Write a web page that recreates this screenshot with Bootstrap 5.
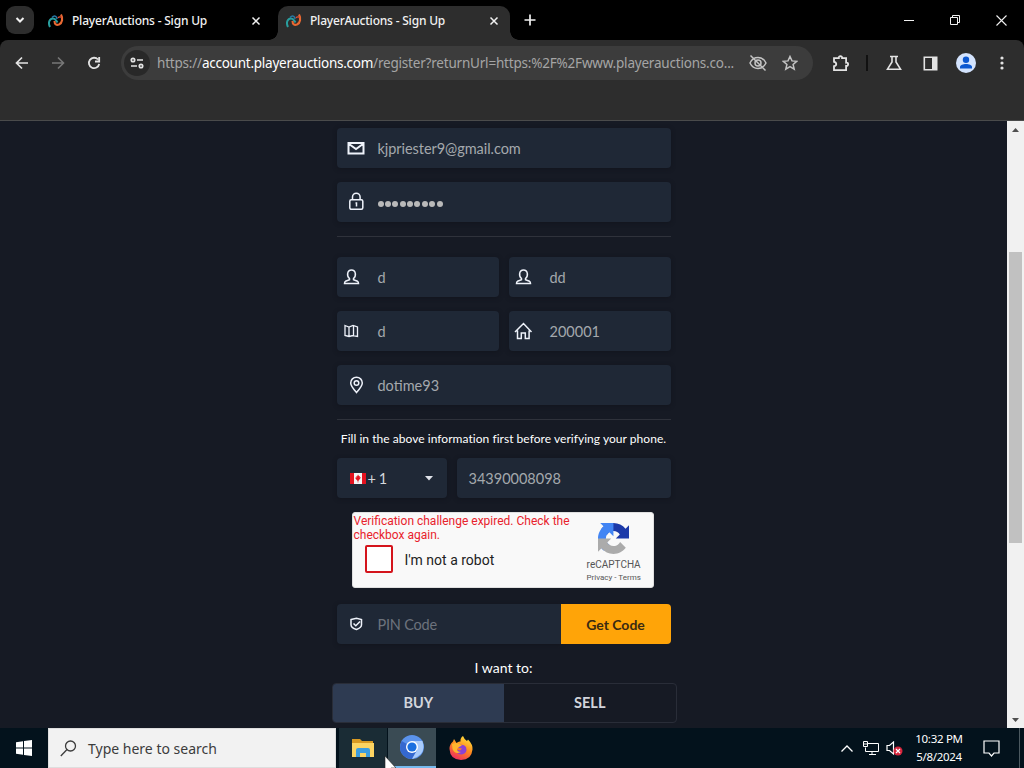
<!DOCTYPE html>
<html lang="en">

<head>
    <meta charset="UTF-8" />
    <meta name="viewport" content="width=device-width, initial-scale=1" />
    <title>PlayerAuctions - Sign Up</title>
    <link href="https://cdn.jsdelivr.net/npm/bootstrap@5.3.3/dist/css/bootstrap.min.css" rel="stylesheet">
    <style>
        body { width: 1024px; height: 768px; overflow: hidden; background: #161a24; font-family: "Noto Sans", sans-serif; }
        svg { display: block; flex: none; }
        .ln { fill: none; stroke: currentColor; }

        /* browser window */
        .tabstrip { height: 40px; background: #000; color: #f1f1f1; }
        .tab-search { width: 28px; height: 28px; margin: 6px 0 0 6px; border-radius: 9px; background: #2d2d2d; }
        .tab-item { height: 34px; margin-top: 6px; padding-bottom: 5px; font: 500 12px "Noto Sans", sans-serif; }
        .tab-first { width: 232px; margin-left: 6px; padding-left: 8px; }
        .tab-active { width: 232px; margin-left: 6px; padding-left: 8px; background: #2d2d2d; border-radius: 10px 10px 0 0; position: relative; }
        .tab-active::before, .tab-active::after { content: ""; position: absolute; bottom: 0; width: 9px; height: 9px; }
        .tab-active::before { left: -9px; background: radial-gradient(circle at 0 0, #000 8.5px, #2d2d2d 9px); }
        .tab-active::after { right: -9px; background: radial-gradient(circle at 100% 0, #000 8.5px, #2d2d2d 9px); }
        .tab-title { width: 179px; margin-left: 8px; white-space: nowrap; letter-spacing: -.2px; }
        .win-btn { width: 46px; height: 40px; }
        .toolbar-wrap { height: 81px; background: #000; }
        .toolbar { height: 81px; background: #2d2d2d; border-bottom: 1px solid #4a4b4b; border-radius: 8px 8px 0 0; }
        .toolbar-row { height: 46px; padding-left: 4px; color: #e3e3e3; }
        .tool-btn { width: 36px; height: 36px; flex: none; }
        .omnibox { width: 692px; height: 34px; margin-left: 9px; border-radius: 17px; background: #3c3c3c; flex: none; }
        .site-chip { width: 26px; height: 26px; margin-left: 3px; border-radius: 50%; background: #282828; flex: none; }
        .url-text { width: 598px; flex: none; padding-left: 7px; font-size: 13.5px; color: #a5a5a5; white-space: nowrap; letter-spacing: -.2px; }
        .url-text b { font-weight: 400; color: #fff; letter-spacing: -.25px; }

        /* sign-up form */
        .page-view { height: 607px; background: #161a24; color: #fff; font-family: Lato, sans-serif; overflow: hidden; }
        .page-main { width: 1007px; }
        .signup { width: 334px; margin: 7px auto 0; }
        .field { height: 40px; background: #1f2836; border-radius: 4px; color: #a4a8ad; font-size: 14.5px; box-shadow: 0 1px 4px #12151d; white-space: nowrap; }
        .field span { padding-top: 1px; }
        .field-icon { width: 20px; height: 20px; margin: 0 12px 0 9px; color: #eef2fa; }
        .field-sm .field-icon { margin: 0 17px 0 4px; }
        .rule { height: 1px; background: #2f323b; }
        .hint { height: 18px; font-size: 12px; line-height: 18px; letter-spacing: .04px; white-space: nowrap; }
        .dot { width: 6px; height: 6px; margin: 2px 1.4px 0 0; border-radius: 50%; background: #b9b9b9; }
        .captcha { width: 302px; height: 76px; margin: 14px auto 0 15px; background: #f9f9f9; border: 1px solid #e0e0e0; border-radius: 3px; color: #222; font-family: Roboto, sans-serif; }
        .captcha-error { color: #e8222c; font-size: 12px; line-height: 14px; padding: 1px 0 0 1px; white-space: nowrap; }
        .captcha-box { width: 28px; height: 28px; margin: 3px 12px 0 12px; border: 2px solid #d4141c; border-radius: 2px; background: #fff; }
        .captcha-brand { width: 78px; color: #555; font-size: 10px; line-height: 12px; padding-top: 10px; }
        .pin { width: 224px; border-radius: 4px 0 0 4px; color: #6d737d; }
        .get-code { width: 110px; height: 40px; padding: 0; border: 0; border-radius: 0 4px 4px 0; background: #ffa408; color: #3a2a12; font-size: 14px; font-weight: 700; }
        .get-code:hover { background: #ffa408; }
        .buy-sell { width: 345px; height: 40px; margin-left: -5px; border: 1px solid #292d38; border-radius: 4px; color: #d2d5dc; font-size: 14.5px; font-weight: 700; overflow: hidden; }
        .buy-on { background: #2e3b52; }

        .scroll { width: 17px; background: #f1f1f1; }
        .scroll-end { height: 17px; }
        .scroll-thumb { width: 13px; height: 291px; margin: 114px auto 0; background: #c1c1c1; }

        /* taskbar */
        .taskbar { height: 40px; background: #03121c; color: #fff; }
        .task-search { width: 288px; background: #f2f2f2; border: 1px solid #dedede; color: #3c3c3c; font-size: 14px; padding-left: 11px; }
        .task-app { width: 48px; height: 40px; }
        .tray-clock { width: 62px; font-size: 11.5px; line-height: 18px; letter-spacing: -.3px; white-space: nowrap; }
        .pointer { position: absolute; left: 384px; top: 755px; }
    </style>
</head>

<body>
    <svg width="0" height="0" class="position-absolute">
        <symbol id="logo" viewBox="0 0 16 16">
            <path d="M2 14C-.5 9 2 5.500 5 5.500c2.500 0 3 2 4.500 4" fill="none" stroke="#299f9f" stroke-width="2" />
            <path d="M4 4.500C7 1.500 9 4 9 6" fill="none" stroke="#287aa8" stroke-width="1.500" />
            <path d="M6.500 8c0 3.500 2 4.500 4.500 3.500C14.500 10 15 5 13 1.500" fill="none" stroke="#e96932" stroke-width="2.100" />
            <path d="M10 5c1-1.500 2-1.500 4-.5" fill="none" stroke="#e14d34" stroke-width="1.300" />
        </symbol>
        <symbol id="close" viewBox="0 0 10 10">
            <path d="M1.500 1.500l7 7M8.500 1.500l-7 7" fill="none" stroke="currentColor" stroke-width="1.500" />
        </symbol>
        <symbol id="person" viewBox="0 0 20 20">
            <path d="M8.500 11.500C5.500 9 6 3 10.500 3S15.500 9 12.500 11.500v1.300l4 1.500q1 .6 1 2.200h-14q0-1.600 1-2.200l4-1.500z" fill="none" stroke="currentColor" stroke-width="1.500" />
        </symbol>
    </svg>

    <!-- TABS -->
    <div class="tabstrip d-flex">
        <div class="tab-search d-flex align-items-center justify-content-center">
            <svg width="10" height="8" class="ln" stroke-width="2"><path d="M1.500 2l3.500 3.500L8.500 2" /></svg>
        </div>
        <div class="tab-item tab-first d-flex align-items-center">
            <svg width="16" height="16"><use href="#logo" /></svg>
            <span class="tab-title">PlayerAuctions - Sign Up</span>
            <svg width="10" height="10"><use href="#close" /></svg>
        </div>
        <div class="tab-item tab-active d-flex align-items-center">
            <svg width="16" height="16"><use href="#logo" /></svg>
            <span class="tab-title">PlayerAuctions - Sign Up</span>
            <svg width="10" height="10"><use href="#close" /></svg>
        </div>
        <div class="win-btn d-flex align-items-center justify-content-center" style="width: 40px">
            <svg width="12" height="12" class="ln" stroke-width="1.700"><path d="M6 .5v11M.5 6h11" /></svg>
        </div>
        <div class="d-flex ms-auto">
            <div class="win-btn d-flex align-items-center justify-content-center">
                <svg width="10" height="10" class="ln"><path d="M0 5.500h10" /></svg>
            </div>
            <div class="win-btn d-flex align-items-center justify-content-center">
                <svg width="10" height="10" class="ln"><path d="M.5 2.500h7v7h-7zM2.500 2.500v-2h7v7h-2" /></svg>
            </div>
            <div class="win-btn d-flex align-items-center justify-content-center">
                <svg width="11" height="11" class="ln" stroke-width="1.100"><path d="M.5.5l10 10M10.500.5l-10 10" /></svg>
            </div>
        </div>
    </div>

    <!-- TOOLBAR -->
    <div class="toolbar-wrap">
        <div class="toolbar">
            <div class="toolbar-row d-flex align-items-center">
                <div class="tool-btn d-flex align-items-center justify-content-center">
                    <svg width="14" height="14" class="ln" stroke-width="1.700"><path d="M13 7H2M7 1.500L1.500 7 7 12.500" /></svg>
                </div>
                <div class="tool-btn d-flex align-items-center justify-content-center" style="color: #777">
                    <svg width="14" height="14" class="ln" stroke-width="1.600"><path d="M1 7h11M7 1.500L12.500 7 7 12.500" /></svg>
                </div>
                <div class="tool-btn d-flex align-items-center justify-content-center">
                    <svg width="14" height="14" class="ln" stroke-width="1.800"><path d="M11 3.500A5.200 5.200 0 1 0 12.200 8M12.200 1v4.500H8" /></svg>
                </div>
                <div class="omnibox d-flex align-items-center">
                    <div class="site-chip d-flex align-items-center justify-content-center">
                        <svg width="14" height="12" class="ln" stroke-width="1.700"><circle cx="3" cy="3" r="1.700" /><path d="M7 3h6M1 9h6" /><circle cx="11" cy="9" r="1.700" /></svg>
                    </div>
                    <div class="url-text">https://<b>account.playerauctions.com</b>/register?returnUrl=https:%2F%2Fwww.playerauctions.co...</div>
                    <svg width="20" height="18" viewBox="0 0 20 18" class="ln" stroke-width="1.500" style="color: #c4c4c4"><path d="M2 9c3.500-7.300 12.500-7.300 16 0-3.500 7.300-12.500 7.300-16 0zM2.500 1.500l15 15" /><circle cx="10" cy="9" r="3" /></svg>
                    <svg width="16" height="16" viewBox="0 0 16 16" class="ln" stroke-width="1.500" style="margin-left: 14px; color: #c4c4c4"><path d="M8 1.500l2 4.400 4.700.4-3.600 3.200 1.100 4.700L8 11.700l-4.200 2.500 1.100-4.700-3.600-3.200 4.700-.4z" /></svg>
                </div>
                <div class="tool-btn d-flex align-items-center justify-content-center" style="margin-left: 10px">
                    <svg width="18" height="18" viewBox="0 0 18 18" class="ln" stroke-width="1.800"><path d="M2 4.200h4.800c-.4-2.600 3.700-2.600 3.300 0h4v4.400c2.700-.4 2.700 3.700 0 3.300v4.300H2v-4c3-.4 3-4 0-4.400z" /></svg>
                </div>
                <div style="width: 2px; height: 16px; margin: 0 8px 0 7px; background: #111"></div>
                <div class="tool-btn d-flex align-items-center justify-content-center">
                    <svg width="16" height="16" viewBox="0 0 16 16" class="ln" stroke-width="1.600"><path d="M4 1.500h8M6 2v5L1.500 14.200h13L10 7V2" /></svg>
                </div>
                <div class="tool-btn d-flex align-items-center justify-content-center">
                    <svg width="15" height="15" viewBox="0 0 15 15"><path class="ln" stroke-width="1.600" d="M1.300 1.300h12.400v12.400H1.300z" /><path d="M9 1h5v13H9z" fill="currentColor" /></svg>
                </div>
                <div class="tool-btn d-flex align-items-center justify-content-center">
                    <svg width="20" height="20" viewBox="0 0 20 20" fill="#0b57d0"><circle cx="10" cy="10" r="10" fill="#d3e3fd" /><circle cx="10" cy="6.800" r="3.200" /><path d="M4 15.500v-1.500c0-4 12-4 12 0v1.500z" /></svg>
                </div>
                <div class="tool-btn d-flex align-items-center justify-content-center">
                    <svg width="4" height="16" fill="currentColor"><circle cx="2" cy="3" r="1.600" /><circle cx="2" cy="8" r="1.600" /><circle cx="2" cy="13" r="1.600" /></svg>
                </div>
            </div>
        </div>
    </div>

    <!-- PAGE -->
    <div class="page-view d-flex">
        <div class="page-main">
            <div class="signup">
                <div class="field d-flex align-items-center">
                    <svg class="field-icon ln" viewBox="0 0 20 20" stroke-width="2"><path d="M2.500 5h15v10.500h-15zM3 6l7 5 7-5" /></svg>
                    <span style="letter-spacing: -.05px">kjpriester9@gmail.com</span>
                </div>
                <div class="field d-flex align-items-center" style="margin-top: 14px">
                    <svg class="field-icon ln" viewBox="0 0 20 20" stroke-width="1.500"><rect x="3.800" y="7.800" width="13" height="9.500" rx="1.500" /><path d="M6.500 7.500V5a3.800 3.800 0 0 1 7.600 0v2.500M9.500 11h1v3.500" /></svg>
                    <span class="d-flex"><i class="dot"></i><i class="dot"></i><i class="dot"></i><i class="dot"></i><i class="dot"></i><i class="dot"></i><i class="dot"></i><i class="dot"></i><i class="dot"></i></span>
                </div>
                <div class="rule" style="margin: 14px 0 20px"></div>

                <div class="d-flex" style="gap: 10px">
                    <div class="field field-sm d-flex align-items-center" style="width: 162px">
                        <svg class="field-icon"><use href="#person" /></svg><span>d</span>
                    </div>
                    <div class="field field-sm d-flex align-items-center" style="width: 162px">
                        <svg class="field-icon"><use href="#person" /></svg><span>dd</span>
                    </div>
                </div>
                <div class="d-flex" style="gap: 10px; margin-top: 14px">
                    <div class="field field-sm d-flex align-items-center" style="width: 162px">
                        <svg class="field-icon ln" viewBox="0 0 20 20" stroke-width="1.300"><path d="M4 4.500l4 1.500 4-1.500 4.500 1.500v9.500L12 14.500 8 15.500l-4-1zM8 6v9.500M12.500 5v9.500" /></svg><span>d</span>
                    </div>
                    <div class="field field-sm d-flex align-items-center" style="width: 162px">
                        <svg class="field-icon ln" viewBox="0 0 20 20" stroke-width="1.500"><path d="M2 11l8.500-8.500L18.500 11M4.500 9.500v8h3.800v-5.500h4v5.500h3.800v-8" /></svg><span>200001</span>
                    </div>
                </div>
                <div class="field d-flex align-items-center" style="margin-top: 14px">
                    <svg class="field-icon ln" viewBox="0 0 20 20" stroke-width="1.500"><path d="M10.500 17.500C7 13.500 4.700 11 4.700 8a5.800 5.800 0 0 1 11.600 0c0 3-2.300 5.500-5.800 9.500z" /><circle cx="10.500" cy="8" r="2.300" /></svg>
                    <span>dotime93</span>
                </div>
                <div class="rule" style="margin: 14px 0 10px"></div>
                <div class="hint text-center">Fill in the above information first before verifying your phone.</div>

                <div class="d-flex" style="gap: 10px; margin-top: 10px">
                    <div class="field d-flex align-items-center" style="width: 110px; padding-left: 13px; color: #d5d8dd">
                        <svg width="16" height="11" viewBox="0 0 16 11"><path fill="#f4f4f4" d="M0 0h16v11H0z" /><path fill="#e5121f" d="M0 0h4v11H0zM12 0h4v11h-4zM8 1.500l.9 1.600.9-.2-.2 1.500 1.200-.4-.4 1.300L8.300 8V9.500h-.6V8L5.600 5.700l-.4-1.300 1.200.4-.2-1.500.9.200z" /></svg>
                        <span style="margin-left: 2px; letter-spacing: -.4px">+ 1</span>
                        <svg width="8" height="5" class="ms-auto" style="margin-right: 14px"><path d="M0 0h8L4 4.500z" fill="#e0e3ea" /></svg>
                    </div>
                    <div class="field d-flex align-items-center" style="width: 214px; padding-left: 12px"><span>34390008098</span></div>
                </div>

                <!-- reCAPTCHA -->
                <div class="captcha d-flex">
                    <div style="width: 223px">
                        <div class="captcha-error">Verification challenge expired. Check the<br>checkbox again.</div>
                        <div class="d-flex align-items-center">
                            <div class="captcha-box"></div>
                            <span style="font-size: 14px; padding-top: 5px">I'm not a robot</span>
                        </div>
                    </div>
                    <div class="captcha-brand d-flex flex-column align-items-center">
                        <svg width="31" height="31" viewBox="0 0 64 64">
                            <path fill="#1c3aa9" d="M64 32V4.700l-7.200 7.100C50.900 4.700 42 .1 32 .1 21.600.1 12.400 5 6.600 12.700l11.700 11.900a15.600 15.600 0 0 1 4.800-5.300c2-1.600 5-2.900 9-2.900 5.500 0 10.300 2.900 12.900 7.200L36.700 32z" />
                            <path fill="#4285f4" d="M31.900.1H4.600l7.200 7.200C4.600 13.100 0 22 0 32c0 10.400 5 19.600 12.600 25.500l11.900-11.700a15.600 15.600 0 0 1-5.300-4.800c-1.600-2-2.900-5-2.900-9 0-5.500 2.900-10.300 7.200-12.900l8.300 8.300z" />
                            <path fill="#ababab" d="M0 32v27.300l7.200-7.200C13.100 59.300 22 63.900 32 63.900c10.400 0 19.600-5 25.400-12.600L45.700 39.400a15.600 15.600 0 0 1-4.800 5.300c-2 1.600-5 2.900-9 2.900-5.500 0-10.300-2.900-12.900-7.200l8.300-8.300z" />
                        </svg>
                        <span style="margin-top: 5px">reCAPTCHA</span>
                        <span style="font-size: 8px; white-space: nowrap; margin-top: 1px">Privacy - Terms</span>
                    </div>
                </div>

                <div class="d-flex" style="margin-top: 16px">
                    <div class="field pin d-flex align-items-center">
                        <svg class="field-icon ln" viewBox="0 0 20 20" stroke-width="1.500"><path d="M5 5.500l5.500-1.200L15.500 5.500v5.300q0 3-5 4.700-5.500-1.700-5.500-4.700zM7.500 9.500l2.300 2.200L14 7.500" /></svg>
                        <span style="letter-spacing: -.2px">PIN Code</span>
                    </div>
                    <button type="button" class="btn get-code">Get Code</button>
                </div>
                <div class="text-center" style="font-size: 14px; line-height: 20px; margin: 14px 0 5px">I want to:</div>
                <div class="buy-sell d-flex text-center">
                    <div class="buy-on w-50 d-flex align-items-center justify-content-center">BUY</div>
                    <div class="w-50 d-flex align-items-center justify-content-center">SELL</div>
                </div>
            </div>
        </div>
        <div class="scroll d-flex flex-column">
            <div class="scroll-end d-flex align-items-center justify-content-center"><svg width="7" height="4"><path d="M0 4l3.500-4L7 4z" fill="#505050" /></svg></div>
            <div class="scroll-thumb"></div>
            <div class="scroll-end d-flex align-items-center justify-content-center mt-auto"><svg width="7" height="4"><path d="M0 0l3.500 4L7 0z" fill="#505050" /></svg></div>
        </div>
    </div>

    <!-- TASKBAR -->
    <div class="taskbar d-flex">
        <div class="task-app d-flex align-items-center justify-content-center">
            <svg width="16" height="16" viewBox="0 0 16 16" fill="#fff"><path d="M0 2.300l7-1v6.200H0zM8 1.100L16 0v7.500H8zM0 8.500h7v6.200l-7-1zM8 8.500h8V16l-8-1.100z" /></svg>
        </div>
        <div class="task-search d-flex align-items-center">
            <svg width="17" height="17" class="ln" stroke-width="1.300"><circle cx="10.500" cy="6" r="5" /><path d="M7 9.500L.8 16" /></svg>
            <span style="margin-left: 11px">Type here to search</span>
        </div>
        <div class="task-app d-flex align-items-center justify-content-center" style="margin-left: 3px; background: #1a2c35">
            <svg width="22" height="20" viewBox="0 0 22 20">
                <path fill="#d99a22" d="M0 1h8l2 2h11v6H0z" /><path fill="#fcd462" d="M0 5h22v14H0z" />
                <path fill="#3d9ddf" d="M4 12q0-2 2-2h10q2 0 2 2v7h-4v-4H8v4H4z" />
            </svg>
        </div>
        <div class="task-app d-flex align-items-center justify-content-center" style="margin-left: 1px; background: #3a4b54; border-bottom: 2px solid #76b9ed">
            <svg width="24" height="24" viewBox="0 0 24 24">
                <circle cx="12" cy="12" r="12" fill="#5b93ec" />
                <path fill="#3568cf" d="M12 12L1.600 6Q-3 17 6 22.400 9 24 12 24l5-9z" />
                <path fill="#a9cbfb" d="M12 6h10.400Q27 20 12 24l5.200-9z" />
                <circle cx="12" cy="12" r="6" fill="#fff" /><circle cx="12" cy="12" r="4.600" fill="#1a6fe0" />
            </svg>
        </div>
        <div class="task-app d-flex align-items-center justify-content-center" style="padding-left: 1px">
            <svg width="24" height="24" viewBox="0 0 24 24">
                <defs><linearGradient id="fox" x1=".8" y1="0" x2=".3" y2="1"><stop offset="0" stop-color="#ffe83f" /><stop offset=".5" stop-color="#ff8a1e" /><stop offset="1" stop-color="#ef2b61" /></linearGradient></defs>
                <path fill="url(#fox)" d="M5 3l2.500 4q2-2 4-1.500Q11 2 14 0q1 3 4 5l1-1.500q5 5 4.500 10Q22.500 24 12 24 1 23.500.5 13 .5 8 4 5.500z" />
                <path fill="#8b42d5" d="M8 10q6-3 9 1 2 6-4 7.500-6 0-6-5l4 1 2-2-4-.500z" />
                <path fill="#ffb52e" d="M3 8q4-2 7 0l3 1.500-3 1.500-2 2Q8 16 12 16q-6 3-8.500-3z" />
            </svg>
        </div>
        <div class="d-flex align-items-center ms-auto">
            <svg width="12" height="7" class="ln" stroke-width="1.300"><path d="M.5 6.500L6 1l5.500 5.500" /></svg>
            <svg width="17" height="15" class="ln" style="margin-left: 10px"><path d="M4.500 2.500h11v8H2.500v-4M9 10.500v3M6 13.500h7M.5.500h4v5h-4zM1 3h3" /></svg>
            <svg width="18" height="15" style="margin-left: 6px"><path class="ln" stroke-width="1.200" d="M1 4.500h2.500L7.500 1v12L3.500 9.500H1z" /><circle cx="12" cy="10" r="4.500" fill="#d7263d" /><path d="M10 8l4 4M14 8l-4 4" stroke="#fff" stroke-width="1.200" /></svg>
            <div class="tray-clock text-center" style="margin-left: 4px">10:32 PM<br>5/8/2024</div>
            <svg width="17" height="17" class="ln" stroke-width="1.200" style="margin-left: 13px"><path d="M1 1h15v12h-5l-2.500 3L6 13H1z" /></svg>
            <div style="width: 1px; height: 40px; margin: 0 4px 0 19px; background: #4c5960"></div>
        </div>
    </div>

    <svg class="pointer" width="12" height="13" viewBox="0 0 12 13"><path d="M1 1v17l4-4 3 6 2-1-3-6h5z" fill="#fff" stroke="#222" stroke-width=".6" /></svg>

    <script src="https://cdn.jsdelivr.net/npm/bootstrap@5.3.3/dist/js/bootstrap.bundle.min.js"></script>
</body>

</html>
